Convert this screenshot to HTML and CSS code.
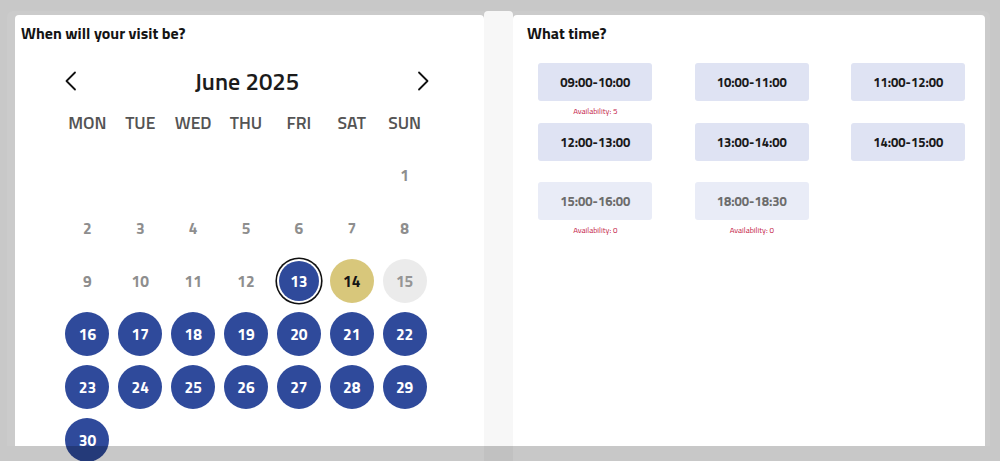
FILE: index.html
```html
<!DOCTYPE html>
<html lang="en">
<head>
<meta charset="utf-8">
<title>Visit booking</title>
<link rel="stylesheet" href="styles.css">
</head>
<body>
<div class="wrap">
  <div class="band band-left">
    <section class="card card-left">
      <h2 class="title title-left">When will your visit be?</h2>
      <div class="cal">
        <div class="cal-nav">
          <svg class="chev chev-prev" width="14" height="20" viewBox="0 0 14 20"><polyline points="11,1.5 2.5,10 11,18.5"/></svg>
          <span class="month">June 2025</span>
          <svg class="chev chev-next" width="14" height="20" viewBox="0 0 14 20"><polyline points="3,1.5 11.5,10 3,18.5"/></svg>
        </div>
        <div class="cal-grid">
          <span class="wd">MON</span><span class="wd">TUE</span><span class="wd">WED</span><span class="wd">THU</span><span class="wd">FRI</span><span class="wd">SAT</span><span class="wd">SUN</span>
          <span class="cell"></span><span class="cell"></span><span class="cell"></span><span class="cell"></span><span class="cell"></span><span class="cell"></span>
          <span class="cell"><span class="day past">1</span></span>
          <span class="cell"><span class="day past">2</span></span>
          <span class="cell"><span class="day past">3</span></span>
          <span class="cell"><span class="day past">4</span></span>
          <span class="cell"><span class="day past">5</span></span>
          <span class="cell"><span class="day past">6</span></span>
          <span class="cell"><span class="day past">7</span></span>
          <span class="cell"><span class="day past">8</span></span>
          <span class="cell"><span class="day past">9</span></span>
          <span class="cell"><span class="day past">10</span></span>
          <span class="cell"><span class="day past">11</span></span>
          <span class="cell"><span class="day past">12</span></span>
          <span class="cell"><span class="day selected">13</span></span>
          <span class="cell"><span class="day today">14</span></span>
          <span class="cell"><span class="day off">15</span></span>
          <span class="cell"><span class="day open">16</span></span>
          <span class="cell"><span class="day open">17</span></span>
          <span class="cell"><span class="day open">18</span></span>
          <span class="cell"><span class="day open">19</span></span>
          <span class="cell"><span class="day open">20</span></span>
          <span class="cell"><span class="day open">21</span></span>
          <span class="cell"><span class="day open">22</span></span>
          <span class="cell"><span class="day open">23</span></span>
          <span class="cell"><span class="day open">24</span></span>
          <span class="cell"><span class="day open">25</span></span>
          <span class="cell"><span class="day open">26</span></span>
          <span class="cell"><span class="day open">27</span></span>
          <span class="cell"><span class="day open">28</span></span>
          <span class="cell"><span class="day open">29</span></span>
          <span class="cell"><span class="day open">30</span></span>
        </div>
      </div>
    </section>
  </div>
  <div class="stripe"></div>
  <div class="band band-right">
    <section class="card card-right">
      <h2 class="title title-right">What time?</h2>
      <div class="slots">
        <div class="slot-cell"><span class="slot">09:00-10:00</span><span class="avail">Availability: 5</span></div>
        <div class="slot-cell"><span class="slot">10:00-11:00</span></div>
        <div class="slot-cell"><span class="slot">11:00-12:00</span></div>
        <div class="slot-cell"><span class="slot">12:00-13:00</span></div>
        <div class="slot-cell"><span class="slot">13:00-14:00</span></div>
        <div class="slot-cell"><span class="slot">14:00-15:00</span></div>
        <div class="slot-cell"><span class="slot full">15:00-16:00</span><span class="avail">Availability: 0</span></div>
        <div class="slot-cell"><span class="slot full">18:00-18:30</span><span class="avail">Availability: 0</span></div>
      </div>
    </section>
  </div>
</div>
<div class="shade"></div>
</body>
</html>
```
FILE: styles.css
```css
* { box-sizing: border-box; }

html, body {
  margin: 0;
  height: 461px;
  overflow: hidden;
}

body {
  background: #ffffff;
  font-family: "Titillium Web", Roboto, "Noto Sans", sans-serif;
  color: #111;
}

.wrap {
  display: flex;
  height: 446px;
  padding: 11px 10px 0 7px;
  background: #c8c8c8;
}

.band {
  background: #cbcbcb;
  padding-top: 4px;
}

.band-left {
  width: 477px;
  padding-left: 8px;
  border-radius: 6px 0 0 0;
}

.band-right {
  width: 477px;
  padding-right: 5px;
  border-radius: 0 6px 0 0;
}

.stripe {
  width: 29px;
  height: 450px;
  flex: none;
  background: #f7f7f7;
  border-radius: 4px 4px 0 0;
}

.card {
  height: 431px;
  background: #ffffff;
  border-radius: 4px 4px 0 0;
}

.title {
  margin: 0;
  padding-top: 8px;
  font-size: 16px;
  line-height: 20px;
  font-weight: 700;
  color: #141414;
}

.title-left { padding-left: 6px; }
.title-right { padding-left: 14px; }

/* calendar */
.cal {
  width: 370px;
  margin-left: 46px;
}

.cal-nav {
  height: 30px;
  margin-top: 23px;
  display: flex;
  align-items: center;
  justify-content: space-between;
  padding: 0 1px 0 3px;
}

.chev {
  fill: none;
  stroke: #111;
  stroke-width: 1.8;
  stroke-linecap: round;
  stroke-linejoin: round;
}

.month {
  font-size: 24px;
  font-weight: 600;
  color: #1b1b1b;
}

.cal-grid {
  display: grid;
  grid-template-columns: repeat(7, 52.86px);
  grid-auto-rows: 52.86px;
}

.wd, .cell {
  display: flex;
  align-items: center;
  justify-content: center;
}

.wd {
  font-size: 17.5px;
  font-weight: 600;
  color: #545454;
}

.day {
  width: 44px;
  height: 44px;
  border-radius: 50%;
  display: flex;
  align-items: center;
  justify-content: center;
  font-size: 15.5px;
  font-weight: 700;
}

.day.past { color: #8e8e8e; }

.day.open {
  background: #2f4a9b;
  color: #ffffff;
}

.day.selected {
  width: 40px;
  height: 40px;
  background: #2f4a9b;
  color: #ffffff;
  box-shadow: 0 0 0 2px #ffffff, 0 0 0 3.6px #111111;
}

.day.today {
  background: #d8c77b;
  color: #151515;
}

.day.off {
  background: #ebebeb;
  color: #959595;
}

/* time slots */
.slots {
  margin-top: 20px;
  padding-left: 4px;
  display: grid;
  grid-template-columns: repeat(3, 156.5px);
  grid-auto-rows: 59.5px;
}

.slot-cell {
  display: flex;
  flex-direction: column;
  align-items: center;
}

.slot {
  width: 114px;
  height: 38px;
  border-radius: 3px;
  background: #dfe3f3;
  display: flex;
  align-items: center;
  justify-content: center;
  font-size: 13px;
  font-weight: 700;
  color: #1a1a1a;
}

.slot.full {
  background: #e9ecf7;
  color: #6c6c6c;
}

.avail {
  margin-top: 5px;
  font-size: 8px;
  line-height: 10px;
  color: #c42248;
}

.shade {
  position: fixed;
  left: 0;
  right: 0;
  bottom: 0;
  height: 15px;
  background: rgba(0, 0, 0, 0.216);
  pointer-events: none;
}
```
